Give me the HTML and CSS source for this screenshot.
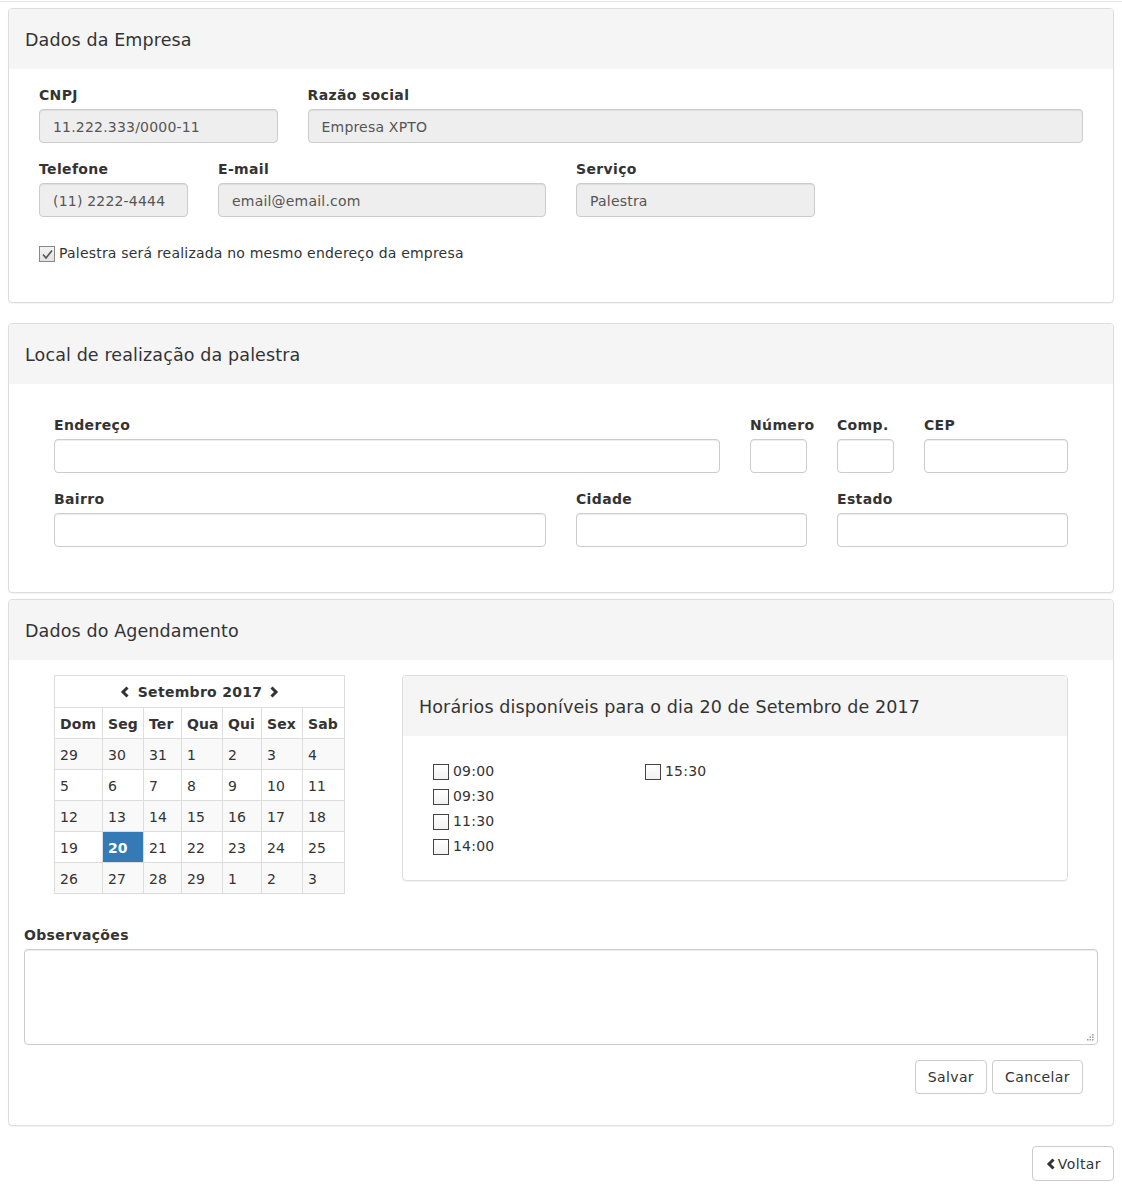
FILE: index.html
```html
<!DOCTYPE html>
<html lang="pt-BR">
<head>
<meta charset="utf-8">
<title>Agendamento de palestra</title>
<link rel="stylesheet" href="styles.css">
</head>
<body>
<div class="topline"></div>
<div class="page">

  <section class="panel">
    <div class="panel-heading"><h3 class="panel-title">Dados da Empresa</h3></div>
    <div class="panel-body body-company">
      <div class="grid">
        <div class="fg span3"><label class="lbl">CNPJ</label><input class="fc" value="11.222.333/0000-11" readonly></div>
        <div class="fg span9"><label class="lbl">Razão social</label><input class="fc" value="Empresa XPTO" readonly></div>
        <div class="fg span2"><label class="lbl">Telefone</label><input class="fc" value="(11) 2222-4444" readonly></div>
        <div class="fg span4"><label class="lbl">E-mail</label><input class="fc" value="email@email.com" readonly></div>
        <div class="fg span3"><label class="lbl">Serviço</label><input class="fc" value="Palestra" readonly></div>
      </div>
      <label class="check company-check"><span class="box checked"><svg width="13" height="13" viewBox="0 0 13 13"><polyline points="2,6.5 5,10 11,2.5" fill="none" stroke="#555" stroke-width="1.6"/></svg></span>Palestra será realizada no mesmo endereço da empresa</label>
    </div>
  </section>

  <section class="panel panel-local">
    <div class="panel-heading"><h3 class="panel-title">Local de realização da palestra</h3></div>
    <div class="panel-body body-local">
      <div class="grid">
        <div class="fg span8"><label class="lbl">Endereço</label><input class="fc"></div>
        <div class="fg span1"><label class="lbl">Número</label><input class="fc"></div>
        <div class="fg span1"><label class="lbl">Comp.</label><input class="fc"></div>
        <div class="fg span2"><label class="lbl">CEP</label><input class="fc"></div>
        <div class="fg span6"><label class="lbl">Bairro</label><input class="fc"></div>
        <div class="fg span3"><label class="lbl">Cidade</label><input class="fc"></div>
        <div class="fg span3"><label class="lbl">Estado</label><input class="fc"></div>
      </div>
    </div>
  </section>

  <section class="panel">
    <div class="panel-heading"><h3 class="panel-title">Dados do Agendamento</h3></div>
    <div class="panel-body body-sched">
      <div class="grid sched-row">
        <div class="span4">
          <table class="cal">
            <colgroup><col class="c-dom"><col class="c-seg"><col class="c-ter"><col class="c-qua"><col class="c-qui"><col class="c-sex"><col class="c-sab"></colgroup>
            <thead>
              <tr><th colspan="7" class="cal-title"><svg class="chev" width="10" height="12" viewBox="0 0 10 12"><polyline points="7.5,1.5 3,6 7.5,10.5" fill="none" stroke="#333" stroke-width="3"/></svg><span class="cal-month">Setembro 2017</span><svg class="chev" width="10" height="12" viewBox="0 0 10 12"><polyline points="2.5,1.5 7,6 2.5,10.5" fill="none" stroke="#333" stroke-width="3"/></svg></th></tr>
              <tr class="dow"><th>Dom</th><th>Seg</th><th>Ter</th><th>Qua</th><th>Qui</th><th>Sex</th><th>Sab</th></tr>
            </thead>
            <tbody>
              <tr class="odd"><td>29</td><td>30</td><td>31</td><td>1</td><td>2</td><td>3</td><td>4</td></tr>
              <tr><td>5</td><td>6</td><td>7</td><td>8</td><td>9</td><td>10</td><td>11</td></tr>
              <tr class="odd"><td>12</td><td>13</td><td>14</td><td>15</td><td>16</td><td>17</td><td>18</td></tr>
              <tr><td>19</td><td class="sel">20</td><td>21</td><td>22</td><td>23</td><td>24</td><td>25</td></tr>
              <tr class="odd"><td>26</td><td>27</td><td>28</td><td>29</td><td>1</td><td>2</td><td>3</td></tr>
            </tbody>
          </table>
        </div>
        <div class="span8">
          <div class="subpanel">
            <div class="panel-heading sub-heading"><h3 class="panel-title">Horários disponíveis para o dia 20 de Setembro de 2017</h3></div>
            <div class="times">
              <div class="time-col">
                <label class="check"><span class="box"></span>09:00</label>
                <label class="check"><span class="box"></span>09:30</label>
                <label class="check"><span class="box"></span>11:30</label>
                <label class="check"><span class="box"></span>14:00</label>
              </div>
              <div class="time-col">
                <label class="check"><span class="box"></span>15:30</label>
              </div>
            </div>
          </div>
        </div>
      </div>

      <div class="obs">
        <label class="lbl">Observações</label>
        <div class="ta-wrap">
          <textarea class="ta"></textarea>
          <svg class="grip" width="7" height="7" viewBox="0 0 7 7"><g fill="#999"><rect x="5" y="0" width="1.5" height="1.5"/><rect x="2.5" y="2.5" width="1.5" height="1.5"/><rect x="5" y="2.5" width="1.5" height="1.5"/><rect x="0" y="5" width="1.5" height="1.5"/><rect x="2.5" y="5" width="1.5" height="1.5"/><rect x="5" y="5" width="1.5" height="1.5"/></g></svg>
        </div>
      </div>

      <div class="actions">
        <button class="btn" type="button">Salvar</button>
        <button class="btn" type="button">Cancelar</button>
      </div>
    </div>
  </section>

  <div class="footer">
    <button class="btn btn-back" type="button"><svg width="10" height="12" viewBox="0 0 10 12"><polyline points="7.5,1.5 3,6 7.5,10.5" fill="none" stroke="#333" stroke-width="3"/></svg>Voltar</button>
  </div>
</div>
</body>
</html>
```

FILE: styles.css
```css
* { box-sizing: border-box; }

html, body {
  margin: 0;
  padding: 0;
  background: #fff;
}

body {
  font-family: "DejaVu Sans", Verdana, sans-serif;
  font-size: 14px;
  line-height: 20px;
  letter-spacing: 0.2px;
  color: #333;
}

.topline {
  margin-top: 1px;
  height: 1px;
  background: #e6e6e6;
}

.page {
  padding: 6px 8px 8px;
}

/* panels */
.panel {
  border: 1px solid #ddd;
  border-radius: 4px;
  box-shadow: 0 1px 1px rgba(0, 0, 0, 0.05);
  margin-bottom: 20px;
  background: #fff;
}

.panel-local { margin-bottom: 6px; }

.panel-heading {
  height: 60px;
  display: flex;
  align-items: center;
  padding: 1px 16px 0;
  background: #f5f5f5;
  border-radius: 3px 3px 0 0;
}

.panel-title {
  margin: 0;
  font-size: 17.5px;
  font-weight: normal;
  letter-spacing: 0.12px;
  color: #333;
  line-height: 22px;
}

.panel-body { padding: 15px; }
.body-company { padding: 15px 30px 15px; }
.body-local { padding: 30px 45px 30px; }
.body-sched { padding: 15px 15px 15px; }

/* grid */
.grid {
  display: grid;
  grid-template-columns: repeat(12, minmax(0, 1fr));
  column-gap: 30px;
}

.span1 { grid-column: span 1; }
.span2 { grid-column: span 2; }
.span3 { grid-column: span 3; }
.span4 { grid-column: span 4; }
.span6 { grid-column: span 6; }
.span8 { grid-column: span 8; }
.span9 { grid-column: span 9; }

.fg { margin-bottom: 15px; }

.lbl {
  display: block;
  font-weight: bold;
  margin-bottom: 4px;
  padding-top: 1px;
  line-height: 20px;
  letter-spacing: 0.35px;
  color: #333;
}

.fc {
  display: block;
  width: 100%;
  height: 34px;
  padding: 7px 12px 5px 13px;
  font-family: "DejaVu Sans", Verdana, sans-serif;
  font-size: 14px;
  line-height: 20px;
  letter-spacing: 0.2px;
  color: #555;
  background: #fff;
  border: 1px solid #ccc;
  border-radius: 4px;
  box-shadow: inset 0 1px 1px rgba(0, 0, 0, 0.075);
  outline: none;
}

.fc[readonly] {
  background: #eee;
}

/* checkboxes */
.check {
  display: flex;
  align-items: center;
  line-height: 20px;
  color: #333;
}

.box {
  width: 16px;
  height: 16px;
  margin-right: 4px;
  border: 1px solid #444;
  background: linear-gradient(#fff, #f1f1f1);
  display: inline-flex;
  align-items: center;
  justify-content: center;
  flex: none;
  margin-top: 2px;
}

.box.checked {
  border-color: #888;
  background: linear-gradient(#f3f3f3, #e2e2e2);
}

.company-check {
  margin: 11px 0 24px;
}

/* schedule */
.sched-row {
  padding: 0 30px;
  margin-bottom: 30px;
}

.cal {
  border-collapse: collapse;
  table-layout: fixed;
  width: 290px;
  border: 1px solid #ddd;
}

.cal col.c-dom { width: 48px; }
.cal col.c-seg { width: 41px; }
.cal col.c-ter { width: 38px; }
.cal col.c-qua { width: 41px; }
.cal col.c-qui { width: 39px; }
.cal col.c-sex { width: 41px; }
.cal col.c-sab { width: 42px; }

.cal th, .cal td {
  border: 1px solid #ddd;
  padding: 6px 5px 4px;
  line-height: 20px;
  text-align: left;
  white-space: nowrap;
  letter-spacing: 0.1px;
}

.cal th { font-weight: bold; }

.cal-title {
  text-align: center !important;
  padding: 6px 0 5px !important;
}

.cal-title .chev { vertical-align: -1px; }

.cal-month { margin: 0 7px 0 8px; letter-spacing: 0.3px; }

.cal tbody tr.odd td { background: #f9f9f9; }

.cal td.sel {
  background: #337ab7 !important;
  color: #fff;
  font-weight: bold;
}

.subpanel {
  border: 1px solid #ddd;
  border-radius: 4px;
  box-shadow: 0 1px 1px rgba(0, 0, 0, 0.05);
}

.sub-heading {
  height: 60px;
}

.times {
  display: grid;
  grid-template-columns: 212px 212px;
  padding: 25px 30px 24px;
}

.time-col .check { margin-bottom: 5px; }
.time-col .check:last-child { margin-bottom: 0; }

/* observations */
.ta-wrap {
  position: relative;
}

.ta {
  display: block;
  width: 100%;
  height: 96px;
  border: 1px solid #ccc;
  border-radius: 4px;
  box-shadow: inset 0 1px 1px rgba(0, 0, 0, 0.075);
  resize: none;
  font-family: "DejaVu Sans", Verdana, sans-serif;
  font-size: 14px;
  padding: 6px 12px;
  outline: none;
}

.grip {
  position: absolute;
  right: 4px;
  bottom: 4px;
}

.actions {
  display: flex;
  justify-content: flex-end;
  gap: 5px;
  padding: 15px 15px 16px 0;
}

.btn {
  height: 34px;
  padding: 6px 12px;
  font-family: "DejaVu Sans", Verdana, sans-serif;
  font-size: 14px;
  line-height: 20px;
  letter-spacing: 0.4px;
  color: #333;
  background: #fff;
  border: 1px solid #ccc;
  border-radius: 4px;
  cursor: pointer;
}

.footer {
  display: flex;
  justify-content: flex-end;
}

.btn-back {
  display: inline-flex;
  align-items: center;
  gap: 2px;
  height: 35px;
  padding: 6px 12px 6px 13px;
}
```
